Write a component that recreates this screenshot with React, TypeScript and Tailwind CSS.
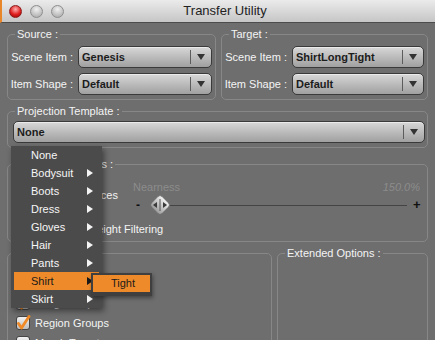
import React from 'react';

const menuItems = ['None', 'Bodysuit', 'Boots', 'Dress', 'Gloves', 'Hair', 'Pants', 'Shirt', 'Skirt'];

const Arrow: React.FC<{ dark?: boolean }> = ({ dark }) => (
  <svg width="6" height="8" viewBox="0 0 6 8">
    <polygon points="0,0 6,4 0,8" fill={dark ? '#1a1a1a' : '#f4f4f4'} />
  </svg>
);

const Select: React.FC<{ value: string; className?: string }> = ({ value, className = '' }) => (
  <div
    className={`flex h-[22px] items-center rounded-[5px] border border-[#3a3a3a] bg-linear-to-b from-[#d8d8d8] to-[#a0a0a0] shadow-[inset_0_1px_0_rgba(255,255,255,0.5)] ${className}`}
  >
    <span className="flex-1 truncate pl-[3px] text-[11px] font-bold text-[#1c1c1c]">{value}</span>
    <span className="h-[14px] w-px bg-[#5c5c5c]" />
    <span className="flex w-[20px] justify-center">
      <svg width="8" height="6" viewBox="0 0 8 6">
        <polygon points="0,0 8,0 4,6" fill="#333" />
      </svg>
    </span>
  </div>
);

const Group: React.FC<{ label: string; className?: string; children: React.ReactNode }> = ({
  label,
  className = '',
  children,
}) => (
  <fieldset className={`min-w-0 rounded-[5px] border border-[#878787] ${className}`}>
    <legend className="ml-[7px] whitespace-nowrap px-[2px] text-[11px] leading-[14px] text-[#f4f4f4]">{label}</legend>
    {children}
  </fieldset>
);

const Field: React.FC<{ label: string; value: string }> = ({ label, value }) => (
  <div className="flex h-[22px] items-center gap-[5px]">
    <span className="flex w-[61px] shrink-0 justify-end whitespace-nowrap text-[11px] text-[#f4f4f4]">{label}</span>
    <Select value={value} className="min-w-0 flex-1" />
  </div>
);

const Check: React.FC<{ label: string; checked?: boolean; className?: string }> = ({
  label,
  checked,
  className = 'h-[20px]',
}) => (
  <div className={`flex items-center gap-[5px] ${className}`}>
    <span className="relative h-[14px] w-[14px] shrink-0 rounded-[3px] border border-[#454545] bg-linear-to-b from-[#f2f2f2] to-[#bdbdbd]">
      {checked && (
        <svg className="absolute -top-[3px] left-0" width="14" height="16" viewBox="0 0 14 16">
          <path d="M1.5 9.5 L4.5 14 L12 2.5" fill="none" stroke="#ef8a26" strokeWidth="2.8" strokeLinecap="round" strokeLinejoin="round" />
        </svg>
      )}
    </span>
    <span className="whitespace-nowrap text-[11px] text-[#f4f4f4]">{label}</span>
  </div>
);

const Thumb: React.FC = () => (
  <svg width="22" height="22" viewBox="0 0 22 22">
    <defs>
      <linearGradient id="tg" x1="0" y1="0" x2="0" y2="1">
        <stop offset="0" stopColor="#f4f4f4" />
        <stop offset="1" stopColor="#9a9a9a" />
      </linearGradient>
    </defs>
    <rect x="3.5" y="3.5" width="15" height="15" rx="3" transform="rotate(45 11 11)" fill="url(#tg)" stroke="#6a6a6a" strokeWidth="0.8" />
    <polygon points="4,11 8,8 8,14" fill="#3a3a3a" />
    <polygon points="18,11 14,8 14,14" fill="#3a3a3a" />
    <line x1="11" y1="5" x2="11" y2="17" stroke="#555" strokeWidth="1" />
  </svg>
);

export default function App() {
  return (
    <div
      className="relative h-[340px] w-[435px] overflow-hidden bg-[#6e6e6e]"
      style={{ fontFamily: '"Liberation Sans", Arial, sans-serif' }}
    >
      {/* Title bar */}
      <div className="flex h-[23px] items-center border-b border-l-2 border-b-[#4c4c4c] border-l-[#e8862a] bg-linear-to-b from-[#ebebeb] to-[#c6c6c6] pl-[7px]">
        <div className="flex gap-[8px]">
          <span className="h-[13px] w-[13px] rounded-full border border-[#8c1c1c] bg-[radial-gradient(circle_at_50%_30%,#ffb0b0,#e02020_55%,#900000)]" />
          <span className="h-[13px] w-[13px] rounded-full border border-[#8e8e8e] bg-[radial-gradient(circle_at_50%_30%,#f0f0f0,#c2c2c2_60%,#a4a4a4)]" />
          <span className="h-[13px] w-[13px] rounded-full border border-[#8e8e8e] bg-[radial-gradient(circle_at_50%_30%,#f0f0f0,#c2c2c2_60%,#a4a4a4)]" />
        </div>
        <div className="flex-1 pr-[49px] text-center text-[13px] text-[#222]">Transfer Utility</div>
      </div>

      <div className="px-[7px]">
        {/* Source / Target */}
        <div className="mt-[4px] flex gap-[5px]">
          <Group label="Source :" className="w-[209px]">
            <div className="flex flex-col gap-[5px] pb-[4px] pl-[4px] pr-[3px] pt-[5px]">
              <Field label="Scene Item :" value="Genesis" />
              <Field label="Item Shape :" value="Default" />
            </div>
          </Group>
          <Group label="Target :" className="flex-1">
            <div className="flex flex-col gap-[5px] pb-[4px] pl-[4px] pr-[3px] pt-[5px]">
              <Field label="Scene Item :" value="ShirtLongTight" />
              <Field label="Item Shape :" value="Default" />
            </div>
          </Group>
        </div>

        {/* Projection template */}
        <Group label="Projection Template :" className="mt-[4px]">
          <div className="pb-[4px] pl-[5px] pr-[2px] pt-[3px]">
            <Select value="None" />
          </div>
        </Group>

        {/* Projection options */}
        <Group label="Projection Options :" className="mt-[9px]">
          <div className="flex pb-[4px]">
            <div className="flex w-[125px] flex-col gap-[18px] pl-[8px] pt-[16px]">
              <Check label="Average Vertices" className="h-[16px]" />
              <Check label="Advanced Weight Filtering" className="h-[16px]" />
            </div>
            <div className="flex-1 pt-[9px]">
              <div className="flex h-[14px] items-center justify-between pr-[7px] text-[11px]">
                <span className="text-[#8c8c8c]">Nearness</span>
                <span className="italic text-[#8c8c8c]">150.0%</span>
              </div>
              <div className="flex h-[22px] items-center">
                <span className="w-[10px] text-center text-[12px] font-bold text-[#111]">-</span>
                <div className="relative flex h-[22px] w-[264px] items-center">
                  <div className="ml-[8px] h-px flex-1 bg-[#444]" />
                  <div className="absolute left-[6px] top-0">
                    <Thumb />
                  </div>
                </div>
                <span className="ml-[6px] text-[13px] font-bold text-[#111]">+</span>
              </div>
            </div>
          </div>
        </Group>

        {/* Options / Extended options */}
        <div className="mt-[4px] flex gap-[5px]">
          <Group label="Options :" className="h-[100px] w-[265px]">
            <div className="pl-[8px] pt-[13px]">
              <Check label="Adjust Rigging" />
              <Check label="Weight Maps" checked />
              <Check label="Region Groups" checked />
              <Check label="Morph Targets" />
            </div>
          </Group>
          <Group label="Extended Options :" className="h-[100px] flex-1">
            <div />
          </Group>
        </div>
      </div>

      {/* Open template menu */}
      <div className="absolute left-[11px] top-[146px] w-[91px] bg-[#4b4b4b] shadow-[2px_3px_6px_rgba(0,0,0,0.45)]">
        {menuItems.map((item) =>
          item === 'Shirt' ? (
            <div key={item} className="mx-[3px] flex h-[18px] items-center bg-[#ee8a2a] pl-[17px] pr-[6px] text-[11px] text-[#1a1a1a]">
              <span className="flex-1">{item}</span>
              <Arrow dark />
            </div>
          ) : (
            <div key={item} className="flex h-[18px] items-center pl-[20px] pr-[9px] text-[11px] text-[#f6f6f6]">
              <span className="flex-1">{item}</span>
              {item !== 'None' && <Arrow />}
            </div>
          ),
        )}
      </div>

      {/* Submenu */}
      <div className="absolute left-[91px] top-[273px] flex h-[23px] w-[61px] bg-[#3f3f3f] p-[2px] pb-[4px] shadow-[1px_2px_4px_rgba(0,0,0,0.4)]">
        <div className="flex flex-1 items-center justify-center bg-[#ee8a2a] pl-[3px] text-[11px] text-[#1a1a1a]">Tight</div>
      </div>
    </div>
  );
}
